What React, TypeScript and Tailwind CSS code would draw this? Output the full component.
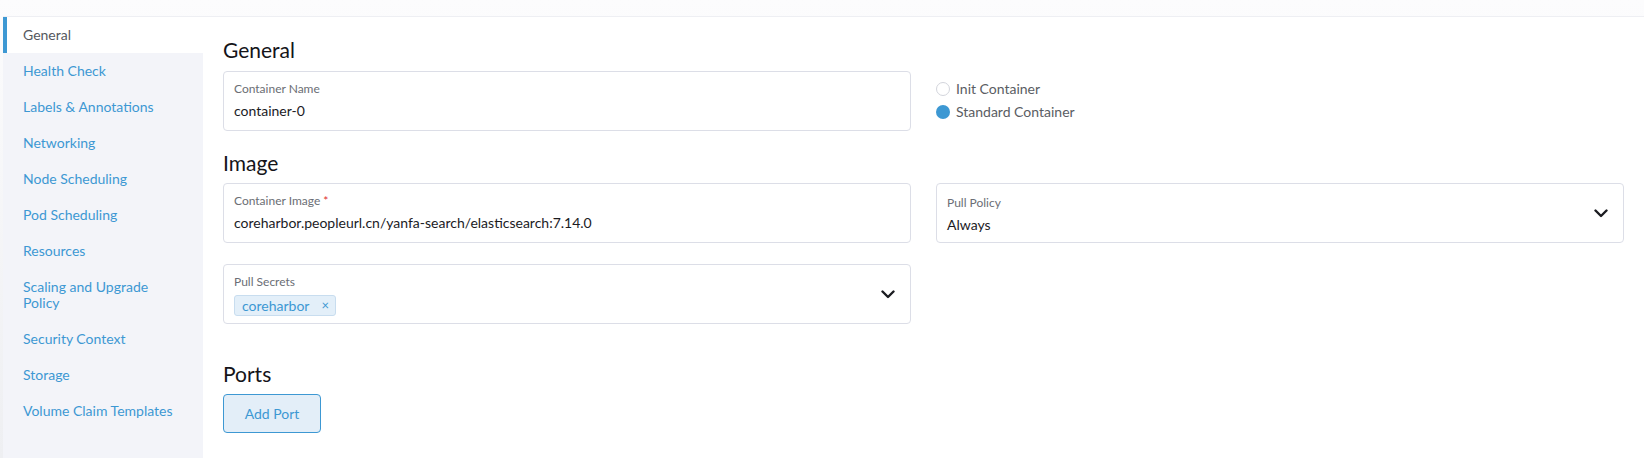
import { useState } from 'react';

const navItems = [
  'General',
  'Health Check',
  'Labels & Annotations',
  'Networking',
  'Node Scheduling',
  'Pod Scheduling',
  'Resources',
  'Scaling and Upgrade Policy',
  'Security Context',
  'Storage',
  'Volume Claim Templates',
];

function Chevron() {
  return (
    <svg width="14" height="9" viewBox="0 0 14 9" fill="none">
      <path d="M1.5 1.5 L7 7 L12.5 1.5" stroke="#1b1c21" strokeWidth="2.4" strokeLinecap="round" strokeLinejoin="round" />
    </svg>
  );
}

function Field({ label, value, required }: { label: string; value: string; required?: boolean }) {
  return (
    <div className="h-[60px] rounded-[4px] border border-[#dcdee7] bg-white px-[10px] pt-[9px]">
      <div className="text-[12px] leading-4 text-[#6b6e75]">
        {label}
        {required && <span className="ml-[3px] text-[#e0312f]">*</span>}
      </div>
      <div className="mt-[4px] text-[14px] leading-5 text-[#1b1b1f]">{value}</div>
    </div>
  );
}

export default function App() {
  const [active, setActive] = useState('General');
  const [standard, setStandard] = useState(true);

  return (
    <div
      className="flex h-[458px] w-full bg-gradient-to-b from-[#fcfcfd] to-[#eeeff2] pl-[3px] pt-[16px]"
      style={{ fontFamily: 'Lato, "Open Sans", sans-serif' }}
    >
      <div className="flex flex-1 border-t border-[#eeeff3] bg-white">
        {/* Side nav */}
        <nav className="flex w-[200px] flex-col bg-[#f3f4f9]">
          {navItems.map((item) => {
            const on = item === active;
            return (
              <button
                key={item}
                onClick={() => setActive(item)}
                className={`border-l-4 py-[10px] pl-4 pr-[26px] text-left text-[14px] leading-4 ${
                  on ? 'border-[#3d98d3] bg-white text-[#55585e]' : 'border-transparent text-[#3d98d3]'
                }`}
              >
                {item}
              </button>
            );
          })}
        </nav>

        {/* Form */}
        <main className="flex-1 px-5 pt-[19px]">
          <h2 className="mb-[7px] text-[21px] leading-7 text-[#141419]">General</h2>
          <div className="grid grid-cols-2 gap-[25px]">
            <Field label="Container Name" value="container-0" />
            <div className="flex flex-col gap-[3px] pt-[8px]">
              <label className="flex cursor-pointer items-center gap-[6px] text-[14px] leading-5 text-[#5a5d63]" onClick={() => setStandard(false)}>
                <span className={`h-[14px] w-[14px] rounded-full ${!standard ? 'bg-[#3d98d3]' : 'border border-[#d3d5dc] bg-white'}`} />
                Init Container
              </label>
              <label className="flex cursor-pointer items-center gap-[6px] text-[14px] leading-5 text-[#5a5d63]" onClick={() => setStandard(true)}>
                <span className={`h-[14px] w-[14px] rounded-full ${standard ? 'bg-[#3d98d3]' : 'border border-[#d3d5dc] bg-white'}`} />
                Standard Container
              </label>
            </div>
          </div>

          <h2 className="mb-[6px] mt-[18px] text-[21px] leading-7 text-[#141419]">Image</h2>
          <div className="grid grid-cols-2 gap-x-[25px] gap-y-[21px]">
            <Field label="Container Image" value="coreharbor.peopleurl.cn/yanfa-search/elasticsearch:7.14.0" required />
            <div className="flex h-[60px] items-center rounded-[4px] border border-[#dcdee7] bg-white pl-[10px] pr-[15px]">
              <div className="flex-1 pt-[3px]">
                <div className="text-[12px] leading-4 text-[#6b6e75]">Pull Policy</div>
                <div className="mt-[4px] text-[14px] leading-5 text-[#1b1b1f]">Always</div>
              </div>
              <Chevron />
            </div>
            <div className="flex h-[60px] items-center rounded-[4px] border border-[#dcdee7] bg-white pl-[10px] pr-[15px]">
              <div className="flex-1 pt-[1px]">
                <div className="text-[12px] leading-4 text-[#6b6e75]">Pull Secrets</div>
                <div className="mt-[5px] flex">
                  <span className="flex h-[21px] items-center rounded-[3px] border border-[#c8ddef] bg-[#e3eff9] pl-[7px] pr-[6px] text-[14px] text-[#3d98d3]">
                    coreharbor
                    <span className="ml-[12px] text-[13px] leading-none">×</span>
                  </span>
                </div>
              </div>
              <Chevron />
            </div>
          </div>

          <h2 className="mb-[6px] mt-[36px] text-[21px] leading-7 text-[#141419]">Ports</h2>
          <button className="h-[39px] w-[98px] rounded-[4px] border border-[#3d98d3] bg-[#e3eef8] text-[14px] text-[#3d98d3]">
            Add Port
          </button>
        </main>
      </div>
    </div>
  );
}
